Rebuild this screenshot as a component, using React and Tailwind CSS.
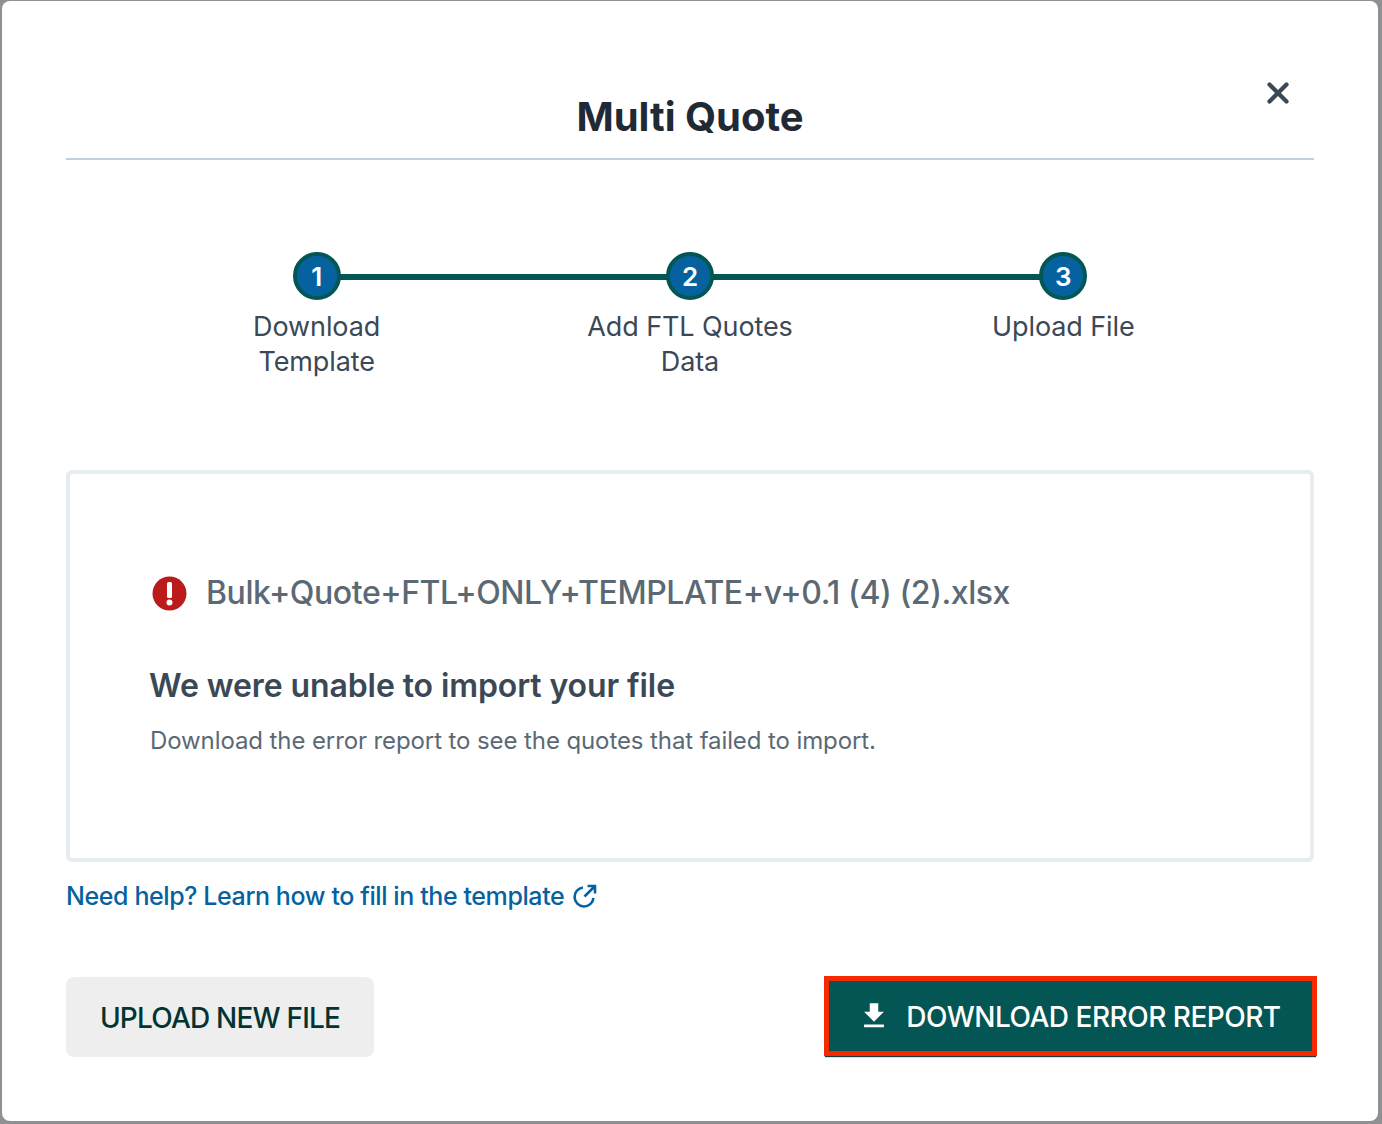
import React from 'react';
import { X } from 'lucide-react';

const steps = [
  { num: 1, label: ['Download', 'Template'] },
  { num: 2, label: ['Add FTL Quotes', 'Data'] },
  { num: 3, label: ['Upload File'] },
];

const ExternalIcon = () => (
  <svg width="26" height="26" viewBox="0 0 26 26" fill="none" stroke="#05629f" strokeWidth="2.6">
    <path d="M11 4.5a9.5 9.5 0 1 0 10.5 10.5" />
    <path d="M12.5 13.5L22.5 3.5M15.5 3h7.5v7.5" />
  </svg>
);

const App = () => {
  return (
    <div className="w-[1382px] h-[1124px] bg-[#8e9093] pt-px pl-[2px] overflow-hidden font-['Inter',sans-serif]">
      <div className="w-[1376px] h-[1120px] bg-white rounded-lg px-16 relative">
        <button className="absolute right-[83px] top-[75px] text-[#3b4856]">
          <X size={34} strokeWidth={3} />
        </button>

        <div className="h-[157px] border-b-2 border-[#c1cfdb] box-content -mb-[2px] flex items-end justify-center">
          <h1 className="text-[40px] leading-[48px] font-bold text-[#1f2a35] pb-[17px]">Multi Quote</h1>
        </div>

        {/* stepper */}
        <div className="mt-[94px] mx-auto w-[1120px] grid grid-cols-3 relative">
          <div className="absolute left-[186px] right-[186px] top-[22px] h-[6px] bg-[#035654]" />
          {steps.map((s) => (
            <div key={s.num} className="flex flex-col items-center relative">
              <div className="w-12 h-12 rounded-full bg-[#05629f] border-4 border-[#035654] text-white font-semibold text-[26px] flex items-center justify-center">
                {s.num}
              </div>
              <div className="mt-[9px] text-center text-[#3b4856] text-[27px] leading-[35px] tracking-[-0.1px]">
                {s.label.map((l) => (
                  <div key={l}>{l}</div>
                ))}
              </div>
            </div>
          ))}
        </div>

        {/* result box */}
        <div className="mt-[91px] h-[392px] border-4 border-[#e6edf1] rounded-md pl-[80px] pt-[99px]">
          <div className="flex items-center gap-[19px] ml-[2px]">
            <svg width="35" height="35" viewBox="0 0 35 35">
              <circle cx="17.5" cy="17.5" r="17" fill="#bb1b1b" />
              <rect x="15" y="6" width="5" height="16" rx="1.5" fill="#fff" />
              <circle cx="17.5" cy="26.5" r="3" fill="#fff" />
            </svg>
            <span className="text-[32px] font-medium text-[#5b6974] tracking-[-0.43px] leading-10">
              Bulk+Quote+FTL+ONLY+TEMPLATE+v+0.1 (4) (2).xlsx
            </span>
          </div>
          <h2 className="mt-[53px] text-[32px] leading-10 font-semibold text-[#3b4856] tracking-[-0.1px] -ml-px">
            We were unable to import your file
          </h2>
          <p className="mt-[19px] text-[24px] leading-8 text-[#5b6974] tracking-[-0.1px]">
            Download the error report to see the quotes that failed to import.
          </p>
        </div>

        <a className="mt-[18px] flex items-center gap-2 text-[25px] leading-8 font-medium text-[#05629f] tracking-[-0.4px]">
          Need help? Learn how to fill in the template
          <ExternalIcon />
        </a>

        {/* footer buttons */}
        <div className="mt-[65px] flex items-start justify-between">
          <button className="w-[308px] h-20 pt-[2px] bg-[#eeeeee] rounded-lg text-[#033432] text-[28px] font-medium tracking-[-0.8px]">
            UPLOAD NEW FILE
          </button>
          <button className="w-[493px] h-20 -mr-[3px] -mt-px pr-[3px] pt-[2px] bg-[#035654] border-[5px] border-[#f52a00] shadow-[0_2px_1px_-1px_#1f3a3a] text-white text-[28px] font-medium tracking-[-0.5px] flex items-center justify-center gap-[15px]">
            <svg width="34" height="34" viewBox="0 0 24 24" fill="#fff" className="-mt-[2px]">
              <path d="M19 9h-4V3H9v6H5l7 7 7-7zM5 18v2h14v-2H5z" />
            </svg>
            <span>DOWNLOAD ERROR REPORT</span>
          </button>
        </div>
      </div>
    </div>
  );
};

export default App;
